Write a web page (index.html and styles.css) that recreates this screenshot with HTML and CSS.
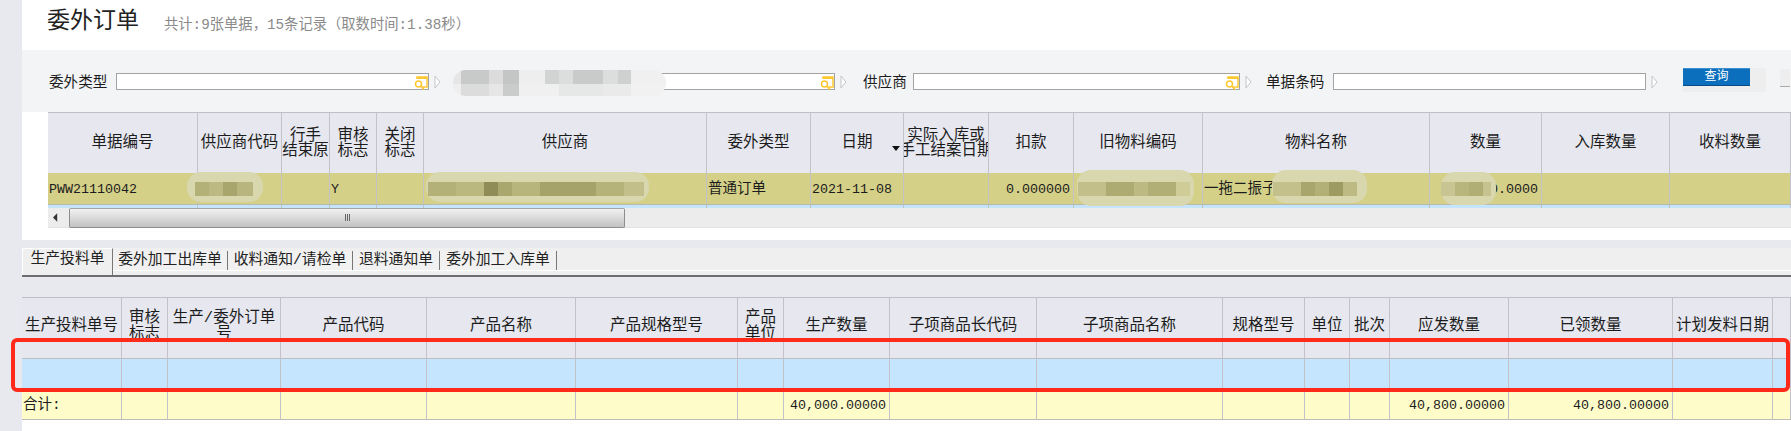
FILE: index.html
```html
<!DOCTYPE html>
<html>
<head>
  <meta charset="UTF-8">
  <title>委外订单</title>
  <link rel="stylesheet" href="styles.css">
</head>
<body>
  <div class="page">
    <div class="side"></div>
    <div class="main">

      <!-- Title -->
      <div class="title-bar">
        <h1>委外订单</h1>
        <span class="summary">共计:9张单据，15条记录（取数时间:1.38秒）</span>
      </div>

      <!-- Filters -->
      <div class="filter-bar">
        <label class="filter-label">委外类型</label>
        <div class="input input-a">
          <svg class="lookup" viewBox="0 0 14 14"><path d="M3 3V1h10v10H8" fill="none" stroke="#fdc82f" stroke-width="1.5"/><path d="M3 1h10v2H3z" fill="#fdc82f"/><circle cx="4.5" cy="8" r="3" fill="#fff" stroke="#fdc82f" stroke-width="1.5"/><path d="M7 10.5l3 3" stroke="#fdc82f" stroke-width="1.6"/></svg>
        </div>
        <svg class="arrow" viewBox="0 0 7 14"><path d="M1 1l5 6-5 6z" fill="#fff" stroke="#c4c4c8"/></svg>
        <div class="input input-b">
          <svg class="lookup" viewBox="0 0 14 14"><path d="M3 3V1h10v10H8" fill="none" stroke="#fdc82f" stroke-width="1.5"/><path d="M3 1h10v2H3z" fill="#fdc82f"/><circle cx="4.5" cy="8" r="3" fill="#fff" stroke="#fdc82f" stroke-width="1.5"/><path d="M7 10.5l3 3" stroke="#fdc82f" stroke-width="1.6"/></svg>
        </div>
        <svg class="arrow" viewBox="0 0 7 14"><path d="M1 1l5 6-5 6z" fill="#fff" stroke="#c4c4c8"/></svg>
        <label class="filter-label supplier-label">供应商</label>
        <div class="input input-c">
          <svg class="lookup" viewBox="0 0 14 14"><path d="M3 3V1h10v10H8" fill="none" stroke="#fdc82f" stroke-width="1.5"/><path d="M3 1h10v2H3z" fill="#fdc82f"/><circle cx="4.5" cy="8" r="3" fill="#fff" stroke="#fdc82f" stroke-width="1.5"/><path d="M7 10.5l3 3" stroke="#fdc82f" stroke-width="1.6"/></svg>
        </div>
        <svg class="arrow" viewBox="0 0 7 14"><path d="M1 1l5 6-5 6z" fill="#fff" stroke="#c4c4c8"/></svg>
        <label class="filter-label barcode-label">单据条码</label>
        <div class="input input-d"></div>
        <svg class="arrow" viewBox="0 0 7 14"><path d="M1 1l5 6-5 6z" fill="#fff" stroke="#c4c4c8"/></svg>
        <div class="btn-wrap"><button class="query-btn">查询</button></div>
        <div class="btn-stub"></div>
      </div>

      <!-- Orders -->
      <div class="orders">
        <div class="grid grid-orders head-orders">
          <div class="cell">单据编号</div>
          <div class="cell">供应商代码</div>
          <div class="cell"><span>行手<br>结束原</span></div>
          <div class="cell"><span>审核<br>标志</span></div>
          <div class="cell"><span>关闭<br>标志</span></div>
          <div class="cell">供应商</div>
          <div class="cell">委外类型</div>
          <div class="cell date-head">日期<i class="sort"></i></div>
          <div class="cell"><span>实际入库或<br>手工结案日期</span></div>
          <div class="cell">扣款</div>
          <div class="cell">旧物料编码</div>
          <div class="cell">物料名称</div>
          <div class="cell">数量</div>
          <div class="cell">入库数量</div>
          <div class="cell">收料数量</div>
        </div>
        <div class="grid grid-orders row-order">
          <div class="cell left num">PWW21110042</div>
          <div class="cell"></div>
          <div class="cell"></div>
          <div class="cell left num">Y</div>
          <div class="cell"></div>
          <div class="cell"></div>
          <div class="cell left">普通订单</div>
          <div class="cell left num">2021-11-08</div>
          <div class="cell"></div>
          <div class="cell right num">0.000000</div>
          <div class="cell"></div>
          <div class="cell left">一拖二振子</div>
          <div class="cell right num">40000.0000</div>
          <div class="cell"></div>
          <div class="cell"></div>
        </div>
        <div class="grid grid-orders row-strip">
          <div class="cell"></div><div class="cell"></div><div class="cell"></div><div class="cell"></div><div class="cell"></div>
          <div class="cell"></div><div class="cell"></div><div class="cell"></div><div class="cell"></div><div class="cell"></div>
          <div class="cell"></div><div class="cell"></div><div class="cell"></div><div class="cell"></div><div class="cell"></div>
        </div>
        <div class="scrollbar">
          <svg class="scroll-arrow" viewBox="0 0 6 10"><path d="M5 0v10L0 5z" fill="#333"/></svg>
          <div class="scroll-thumb"><i></i><i></i><i></i></div>
        </div>
      </div>

      <!-- Tabs -->
      <div class="tabs">
        <div class="tab active">生产投料单</div>
        <div class="tab tab-2">委外加工出库单</div>
        <div class="tab tab-3">收料通知/请检单</div>
        <div class="tab tab-4">退料通知单</div>
        <div class="tab tab-5">委外加工入库单</div>
      </div>

      <!-- Detail -->
      <div class="detail">
        <div class="grid grid-detail head-detail">
          <div class="cell">生产投料单号</div>
          <div class="cell top"><span>审核<br>标志</span></div>
          <div class="cell top"><span>生产/委外订单<br>号</span></div>
          <div class="cell">产品代码</div>
          <div class="cell">产品名称</div>
          <div class="cell">产品规格型号</div>
          <div class="cell top"><span>产品<br>单位</span></div>
          <div class="cell">生产数量</div>
          <div class="cell">子项商品长代码</div>
          <div class="cell">子项商品名称</div>
          <div class="cell">规格型号</div>
          <div class="cell">单位</div>
          <div class="cell">批次</div>
          <div class="cell">应发数量</div>
          <div class="cell">已领数量</div>
          <div class="cell">计划发料日期</div>
          <div class="cell"></div>
        </div>
        <div class="grid grid-detail row-grey">
          <div class="cell"></div><div class="cell"></div><div class="cell"></div><div class="cell"></div><div class="cell"></div><div class="cell"></div>
          <div class="cell"></div><div class="cell"></div><div class="cell"></div><div class="cell"></div><div class="cell"></div><div class="cell"></div>
          <div class="cell"></div><div class="cell"></div><div class="cell"></div><div class="cell"></div><div class="cell"></div>
        </div>
        <div class="grid grid-detail row-blue">
          <div class="cell"></div><div class="cell"></div><div class="cell"></div><div class="cell"></div><div class="cell"></div><div class="cell"></div>
          <div class="cell"></div><div class="cell"></div><div class="cell"></div><div class="cell"></div><div class="cell"></div><div class="cell"></div>
          <div class="cell"></div><div class="cell"></div><div class="cell"></div><div class="cell"></div><div class="cell"></div>
        </div>
        <div class="grid grid-detail row-total">
          <div class="cell left">合计:</div>
          <div class="cell"></div><div class="cell"></div><div class="cell"></div><div class="cell"></div><div class="cell"></div><div class="cell"></div>
          <div class="cell right num">40,000.00000</div>
          <div class="cell"></div><div class="cell"></div><div class="cell"></div><div class="cell"></div><div class="cell"></div>
          <div class="cell right num">40,800.00000</div>
          <div class="cell right num">40,800.00000</div>
          <div class="cell"></div><div class="cell"></div>
        </div>
      </div>
    </div>
  </div>

  <!-- Redacted patches and the marker box lie over the page -->
  <div class="smudge smudge-filter"></div>
  <div class="smudge smudge-code"><i class="mosaic m1"></i></div>
  <div class="smudge smudge-supplier"><i class="mosaic m2"></i></div>
  <div class="smudge smudge-old"><i class="mosaic m3"></i></div>
  <div class="smudge smudge-name"><i class="mosaic m4"></i></div>
  <div class="smudge smudge-qty"><i class="mosaic m5"></i></div>
  <div class="marker"></div>
</body>
</html>
```
FILE: styles.css
```css
html, body {
  margin: 0;
  height: 431px;
  overflow: hidden;
  background: #fff;
}
body {
  font-family: "Liberation Mono", "Noto Sans CJK SC", monospace;
  font-size: 14.5px;
  color: #1c1c1c;
}
.page {
  display: flex;
  height: 431px;
}
.side {
  width: 22px;
  flex: none;
  background: #e8e9ef;
}
.main {
  flex: 1;
  min-width: 0;
}

/* title */
.title-bar {
  height: 50px;
  display: flex;
  align-items: center;
  padding: 0 0 6px 25px;
  box-sizing: border-box;
}
h1 {
  margin: 0;
  width: 117px;
  font-size: 23px;
  font-weight: normal;
  line-height: 42px;
  color: #222;
  height: 42px;
}
.summary {
  font-size: 14.3px;
  color: #8a8a8a;
}

/* filters */
.filter-bar {
  height: 62px;
  background: #f3f4f6;
  box-sizing: border-box;
  padding: 18px 0 0 27px;
  display: flex;
  align-items: flex-start;
}
.filter-label {
  width: 67px;
  flex: none;
  line-height: 27px;
  font-size: 14.6px;
  height: 27px;
  margin-top: 2px;
}
.input {
  height: 17px;
  margin-top: 5px;
  flex: none;
  box-sizing: border-box;
  border: 1px solid #a3a3a3;
  background: #fff;
  display: flex;
  justify-content: flex-end;
  align-items: flex-start;
}
.input-a { width: 313px; }
.input-b { width: 314px; margin-left: 80px; }
.input-c { width: 327px; }
.input-d { width: 313px; }
.lookup {
  width: 14px;
  height: 14px;
  margin-top: 2px;
  overflow: visible;
}
.arrow {
  width: 7px;
  height: 14px;
  flex: none;
  margin: 7px 0 0 5px;
}
.supplier-label {
  width: 50px;
  margin-left: 16px;
}
.barcode-label {
  margin-left: 14px;
}
.btn-wrap {
  width: 83px;
  height: 24px;
  margin-left: 25px;
  background: #eee;
  flex: none;
}
.query-btn {
  display: block;
  width: 67px;
  height: 18px;
  padding: 0;
  border: none;
  border-top: 1px solid #3b8fd0;
  border-bottom: 1px solid #0a4a86;
  background: #0b6fbd;
  color: #fff;
  font-family: inherit;
  font-size: 12px;
  line-height: 15px;
}
.btn-stub {
  width: 10px;
  height: 18px;
  margin: 1px 0 0 14px;
  flex: none;
  background: #eee;
  border-bottom: 1px solid #aaa;
  box-sizing: border-box;
}

/* grids */
.grid {
  display: grid;
}
.grid-orders {
  margin-left: 26px;
  grid-template-columns: 150px 84px 48px 47px 47px 283px 104px 93px 85px 85px 129px 227px 112px 128px 121px;
}
.grid-detail {
  grid-template-columns: 100px 46px 113px 146px 149px 162px 46px 106px 147px 186px 82px 45px 40px 119px 164px 100px 18px;
}
.cell {
  border-right: 1px solid #c2c2c8;
  box-sizing: border-box;
  display: flex;
  align-items: center;
  justify-content: center;
  overflow: hidden;
  white-space: nowrap;
  line-height: 15.5px;
  min-width: 0;
}
.cell span {
  flex: none;
  text-align: center;
}
.cell.left {
  justify-content: flex-start;
  padding-left: 1px;
}
.cell.right {
  justify-content: flex-end;
  padding-right: 3px;
}
.num {
  font-size: 13.33px;
}
.head-orders {
  height: 61px;
  background: #e6e7ef;
  border-top: 1px solid #c0c0c4;
  box-sizing: border-box;
  font-size: 15.5px;
}
.head-orders .cell {
  padding-top: 2px;
}
.date-head {
  position: relative;
}
.sort {
  position: absolute;
  right: 3px;
  top: 33px;
  border: 4px solid transparent;
  border-top: 5px solid #111;
  border-bottom: none;
}
.row-order {
  height: 32px;
  background: #d4d088;
  border-bottom: 1px solid #b9b9b0;
  box-sizing: border-box;
}
.row-order .cell {
  padding-top: 2px;
}
.row-strip {
  height: 3px;
  background: #c5e4fd;
}
.scrollbar {
  margin-left: 26px;
  height: 20px;
  background: #ececec;
  border-bottom: 1px solid #e2e2e2;
  box-sizing: border-box;
  display: flex;
  align-items: center;
}
.scroll-arrow {
  width: 5px;
  height: 9px;
  margin-left: 5px;
}
.scroll-thumb {
  width: 556px;
  height: 20px;
  margin-left: 11px;
  box-sizing: border-box;
  border: 1px solid #8d8d8d;
  border-top-color: #a5a5a5;
  border-radius: 2px;
  background: linear-gradient(#f1f1f1, #dcdcdc 45%, #c2c2c2);
  display: flex;
  justify-content: center;
  align-items: center;
  gap: 1px;
}
.scroll-thumb i {
  width: 1px;
  height: 7px;
  background: #666;
}

/* tabs */
.tabs {
  margin-top: 12px;
  border-top: 8px solid #e8e9ef;
  height: 27px;
  box-sizing: content-box;
  background: linear-gradient(#efefef 22px, #fff 22px, #fff 23px, #efefef 23px);
  border-bottom: 2px solid #6d6d70;
  display: flex;
  align-items: flex-start;
}
.tab {
  height: 19px;
  margin-top: 3px;
  box-sizing: border-box;
  background: #f1f1f1;
  border-right: 1px solid #777;
  line-height: 19px;
  text-align: center;
  font-size: 14.8px;
  color: #222;
  overflow: hidden;
  white-space: nowrap;
}
.tab.active {
  width: 91px;
  height: 27px;
  margin-top: 0;
  line-height: 21px;
  background: #efefef;
  border-left: 1px solid #fff;
  border-top: 1px solid #fff;
}
.tab-2 { width: 115px; }
.tab-3 { width: 125px; }
.tab-4 { width: 87px; }
.tab-5 { width: 117px; }

/* detail */
.detail {
  padding-top: 20px;
  background: linear-gradient(#e8e9ef 20px, #fff 20px);
}
.head-detail {
  height: 43px;
  background: #e6e7ef;
  border-top: 1px solid #c0c0c4;
  box-sizing: border-box;
  font-size: 15.5px;
}
.head-detail .cell {
  align-items: flex-start;
  padding-top: 21px;
}
.head-detail .cell.top {
  padding-top: 13px;
}
.row-grey {
  height: 19px;
  background: #e6e7ef;
  border-bottom: 1px solid #bdbdc4;
  box-sizing: border-box;
}
.row-blue {
  height: 30px;
  background: #c5e4fd;
}
.row-total {
  height: 31px;
  background: #fefdc9;
  border-bottom: 1px solid #bcbcbc;
  box-sizing: border-box;
}
.row-total .cell {
  padding-top: 4px;
}

/* overlays */
.smudge {
  position: absolute;
  border-radius: 14px;
  background: #d9d7ae;
}
.mosaic {
  position: absolute;
  top: 10px;
  height: 14px;
  display: block;
}
.smudge-filter {
  left: 453px;
  top: 70px;
  width: 213px;
  height: 26px;
  background:
    linear-gradient(90deg, #e6e6e6 0 8px, #c8c9c9 8px 36px, #dcdcdc 36px 50px, #c4c5c5 50px 66px, #eeeeee 66px 92px, #d2d3d3 92px 106px, #dcdddd 106px 120px, #c9caca 120px 150px, #dcdddd 150px 165px, #cfd0d0 165px 178px, #f0f0f0 178px) top / 100% 14px no-repeat,
    linear-gradient(90deg, #eeeeee 0 8px, #dcdcdc 8px 36px, #e6e6e6 36px 50px, #cacbcb 50px 66px, #f0f0f0 66px 106px, #e6e7e7 106px 150px, #eaeaea 150px 178px, #f1f1f1 178px) bottom / 100% 12px no-repeat;
}
.smudge-code { left: 187px; top: 172px; width: 76px; height: 30px; }
.smudge-supplier { left: 426px; top: 172px; width: 223px; height: 30px; }
.smudge-old { left: 1077px; top: 170px; width: 117px; height: 36px; }
.smudge-name { left: 1272px; top: 170px; width: 95px; height: 33px; }
.smudge-qty { left: 1441px; top: 172px; width: 55px; height: 33px; }
.m1 {
  left: 8px;
  width: 58px;
  background: linear-gradient(90deg, #b3b078 0 14px, #bcb983 14px 28px, #a9a66d 28px 42px, #b8b57e 42px);
}
.m2 {
  left: 2px;
  top: 10px;
  width: 216px;
  background: linear-gradient(90deg, #b3b078 0 28px, #bab77f 28px 56px, #8f8c58 56px 70px, #aaa76e 70px 84px, #b7b47c 84px 112px, #a5a26a 112px 168px, #b5b27a 168px 196px, #c2bf8a 196px);
}
.m3 {
  left: 1px;
  top: 12px;
  width: 112px;
  background: linear-gradient(90deg, #c2bf8a 0 28px, #aeab72 28px 56px, #bcb983 56px 70px, #b1ae76 70px 98px, #cfcc98 98px);
}
.m4 {
  top: 12px;
  right: 10px;
  width: 84px;
  background: linear-gradient(90deg, #c3c08b 0 28px, #a9a66d 28px 42px, #b2af77 42px 56px, #9d9a62 56px 70px, #bdba84 70px);
}
.m5 {
  left: 0;
  top: 10px;
  width: 50px;
  background: linear-gradient(90deg, #c8c592 0 14px, #b8b57d 14px 28px, #b0ad75 28px 42px, #c6c390 42px);
}
.marker {
  position: absolute;
  left: 11px;
  top: 338px;
  width: 1779px;
  height: 54px;
  box-sizing: border-box;
  border: 4px solid #ff2a1a;
  border-radius: 6px;
}
```
